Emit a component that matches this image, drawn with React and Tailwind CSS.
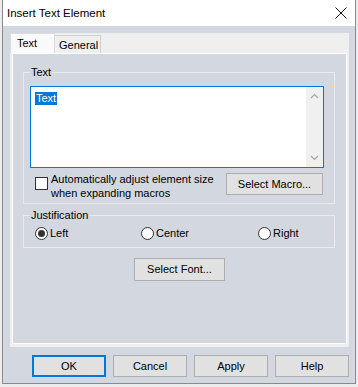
import React from "react";

const font = "font-['Liberation_Sans',Arial,sans-serif] text-[11px] text-black";

const Button = ({ children, className = "", primary = false }) => (
  <button
    className={`${primary ? "border-2 border-[#0078d7]" : "border border-[#adadad]"} bg-[#e1e1e1] flex items-center justify-center leading-none ${className}`}
  >
    {children}
  </button>
);

const Radio = ({ label, checked }) => (
  <label className="flex items-center leading-[13px]">
    <span className="w-[13px] h-[13px] rounded-full border border-[#333] bg-white flex items-center justify-center">
      {checked && <span className="w-[7px] h-[7px] rounded-full bg-[#333]"></span>}
    </span>
    <span className="ml-[2px]">{label}</span>
  </label>
);

const Chevron = ({ down }) => (
  <svg width="9" height="6" viewBox="0 0 9 6">
    <path
      d={down ? "M1 1 L4.5 4.5 L8 1" : "M1 5 L4.5 1.5 L8 5"}
      fill="none"
      stroke="#a6a6a6"
      strokeWidth="1.2"
    />
  </svg>
);

export default function App() {
  return (
    <div className={`w-[358px] h-[387px] bg-[#ececec] ${font}`}>
      <div className="ml-[2px] w-[354px] h-[384px] border border-t-0 border-[#8a8a8a] flex flex-col">
        {/* TITLE BAR */}
        <div className="h-[26px] bg-white flex items-center justify-between pl-[4px] pr-[8px]">
          <span className="text-[11.5px] pt-[1px]">Insert Text Element</span>
          <svg width="12" height="12" viewBox="0 0 12 12">
            <path d="M0.5 0.5 L11.5 11.5 M11.5 0.5 L0.5 11.5" stroke="#111" strokeWidth="1" />
          </svg>
        </div>

        {/* BODY */}
        <div className="flex-1 bg-[#d3d7df] pt-[7px] pl-[7px]">
          <div className="w-[339px] bg-[#efefef]">
            {/* TABS */}
            <div className="flex items-end h-[20px]">
              <div className="w-[45px] h-[20px] bg-[#fafafa] border-l border-t border-r border-[#dcdcdc] pl-[6px] leading-[19px]">
                Text
              </div>
              <div className="w-[46px] h-[18px] bg-[#efefef] border-t border-r border-[#d0d0d0] pl-[4px] leading-[18px]">
                General
              </div>
            </div>

            {/* PAGE */}
            <div className="h-[294px] px-[2px] pb-[3px]">
              <div className="h-full border border-white bg-[#d3d7df] flex flex-col">
                {/* TEXT GROUP */}
                <fieldset className="ml-[10px] mt-[10px] w-[312px] border border-[#e8eaee] pl-[6px] pb-[3px]">
                  <legend className="px-[1px] leading-[16px]">Text</legend>
                  <div className="mt-[6px] w-[294px] h-[82px] border border-[#0078d7] bg-white flex">
                    <div className="flex-1 pl-[4px] pt-[3px]">
                      <span className="bg-[#0078d7] text-white px-[1px] leading-[13px] inline-block">Text</span>
                    </div>
                    <div className="w-[17px] bg-[#f0f0f0] flex flex-col items-center justify-between py-[6px]">
                      <Chevron />
                      <Chevron down />
                    </div>
                  </div>
                  <div className="mt-[4px] w-[294px] flex items-start pl-[5px]">
                    <span className="mt-[5px] w-[13px] h-[13px] border border-[#333] bg-white shrink-0"></span>
                    <span className="ml-[3px] leading-[14px]">
                      Automatically adjust element size
                      <br />
                      when expanding macros
                    </span>
                    <Button className="ml-auto mr-[1px] mt-[1px] w-[97px] h-[22px]">Select Macro...</Button>
                  </div>
                </fieldset>

                {/* JUSTIFICATION GROUP */}
                <fieldset className="ml-[10px] mt-[3px] w-[312px] border border-[#e8eaee] pl-[6px] pb-[7px]">
                  <legend className="px-[1px] leading-[16px]">Justification</legend>
                  <div className="mt-[4px] pl-[5px] flex">
                    <div className="w-[106px]">
                      <Radio label="Left" checked />
                    </div>
                    <div className="w-[117px]">
                      <Radio label="Center" />
                    </div>
                    <Radio label="Right" />
                  </div>
                </fieldset>

                <Button className="mt-[10px] mx-auto w-[91px] h-[23px]">Select Font...</Button>
              </div>
            </div>
          </div>

          {/* FOOTER BUTTONS */}
          <div className="mt-[8px] w-[339px] flex justify-end gap-[7px]">
            <Button primary className="w-[74px] h-[22px]">OK</Button>
            <Button className="w-[74px] h-[22px]">Cancel</Button>
            <Button className="w-[74px] h-[22px]">Apply</Button>
            <Button className="w-[74px] h-[22px]">Help</Button>
          </div>
        </div>
      </div>
    </div>
  );
}
